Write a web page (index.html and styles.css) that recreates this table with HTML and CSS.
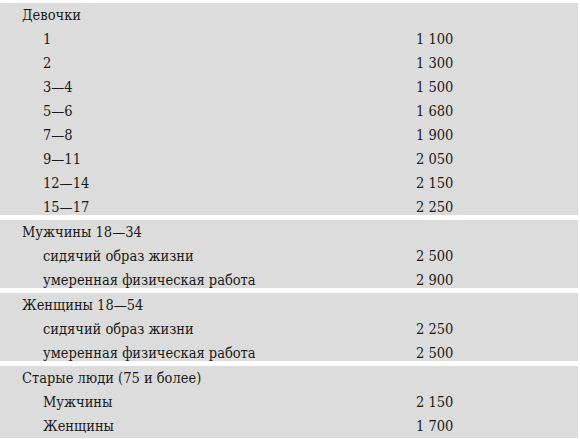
FILE: index.html
```html
<!DOCTYPE html>
<html lang="ru">
<head>
<meta charset="utf-8">
<link rel="stylesheet" href="styles.css">
</head>
<body>
<div class="table">
  <div class="group">
    <div class="row head"><span class="label">Девочки</span><span class="value"></span></div>
    <div class="row"><span class="label">1</span><span class="value">1 100</span></div>
    <div class="row"><span class="label">2</span><span class="value">1 300</span></div>
    <div class="row"><span class="label">3—4</span><span class="value">1 500</span></div>
    <div class="row"><span class="label">5—6</span><span class="value">1 680</span></div>
    <div class="row"><span class="label">7—8</span><span class="value">1 900</span></div>
    <div class="row"><span class="label">9—11</span><span class="value">2 050</span></div>
    <div class="row"><span class="label">12—14</span><span class="value">2 150</span></div>
    <div class="row"><span class="label">15—17</span><span class="value">2 250</span></div>
  </div>
  <div class="group">
    <div class="row head"><span class="label">Мужчины 18—34</span><span class="value"></span></div>
    <div class="row"><span class="label">сидячий образ жизни</span><span class="value">2 500</span></div>
    <div class="row"><span class="label">умеренная физическая работа</span><span class="value">2 900</span></div>
  </div>
  <div class="group">
    <div class="row head"><span class="label">Женщины 18—54</span><span class="value"></span></div>
    <div class="row"><span class="label">сидячий образ жизни</span><span class="value">2 250</span></div>
    <div class="row"><span class="label">умеренная физическая работа</span><span class="value">2 500</span></div>
  </div>
  <div class="group">
    <div class="row head"><span class="label">Старые люди (75 и более)</span><span class="value"></span></div>
    <div class="row"><span class="label">Мужчины</span><span class="value">2 150</span></div>
    <div class="row"><span class="label">Женщины</span><span class="value">1 700</span></div>
  </div>
</div>
</body>
</html>
```

FILE: styles.css
```css
html, body {
  margin: 0;
  padding: 0;
  background: #ffffff;
}

body {
  font-family: "DejaVu Serif Condensed", "DejaVu Serif", serif;
  font-stretch: condensed;
  font-size: 14.5px;
  color: #1a1a1a;
  overflow: hidden;
}

.table {
  width: 578px;
  padding-top: 3px;
}

.group {
  background: #dcdcdc;
}

.group + .group {
  margin-top: -4px;
  border-top: 5px solid #ffffff;
}

.row {
  display: grid;
  grid-template-columns: 373px 1fr;
  height: 24px;
  line-height: 24px;
  padding-left: 43px;
}

.row.head {
  padding-left: 22px;
  grid-template-columns: 394px 1fr;
}

.value {
  white-space: nowrap;
}
```
